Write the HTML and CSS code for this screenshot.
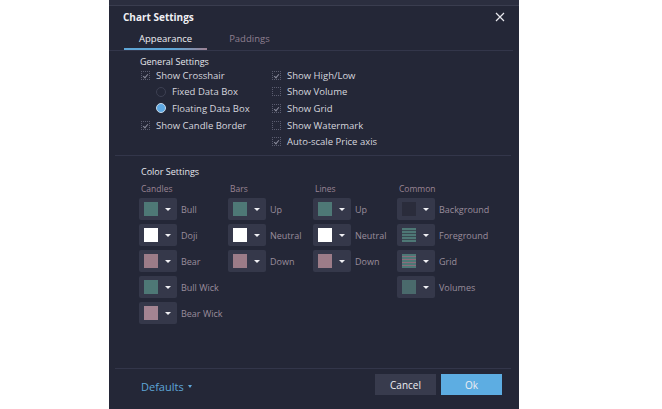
FILE: index.html
```html
<!DOCTYPE html>
<html>
<head>
<meta charset="utf-8">
<link rel="stylesheet" href="styles.css">
</head>
<body>
<div class="dialog">
  <div class="topstrip"></div>
  <div class="titlebar">
    <span class="title">Chart Settings</span>
    <svg class="close" width="10" height="10" viewBox="0 0 10 10"><path d="M1 1L9 9M9 1L1 9" stroke="#e8e8ee" stroke-width="1.2"/></svg>
  </div>
  <div class="tabs">
    <div class="tab active">Appearance</div>
    <div class="tab">Paddings</div>
  </div>
  <div class="general">
    <div class="sec-title">General Settings</div>
    <div class="opts">
      <div class="col">
        <div class="opt"><span class="cb on"></span>Show Crosshair</div>
        <div class="opt sub"><span class="rd"></span>Fixed Data Box</div>
        <div class="opt sub"><span class="rd on"></span>Floating Data Box</div>
        <div class="opt"><span class="cb on"></span>Show Candle Border</div>
      </div>
      <div class="col">
        <div class="opt"><span class="cb on"></span>Show High/Low</div>
        <div class="opt"><span class="cb"></span>Show Volume</div>
        <div class="opt"><span class="cb on"></span>Show Grid</div>
        <div class="opt"><span class="cb"></span>Show Watermark</div>
        <div class="opt"><span class="cb on"></span>Auto-scale Price axis</div>
      </div>
    </div>
  </div>
  <div class="colors">
    <div class="sec-title">Color Settings</div>
    <div class="cgrid">
      <div class="ccol">
        <div class="chead">Candles</div>
        <div class="crow"><span class="cbtn"><span class="sw teal"></span><span class="caret"></span></span>Bull</div>
        <div class="crow"><span class="cbtn"><span class="sw white"></span><span class="caret"></span></span>Doji</div>
        <div class="crow"><span class="cbtn"><span class="sw pink"></span><span class="caret"></span></span>Bear</div>
        <div class="crow"><span class="cbtn"><span class="sw teal"></span><span class="caret"></span></span>Bull Wick</div>
        <div class="crow"><span class="cbtn"><span class="sw pinkdot"></span><span class="caret"></span></span>Bear Wick</div>
      </div>
      <div class="ccol">
        <div class="chead">Bars</div>
        <div class="crow"><span class="cbtn"><span class="sw teal"></span><span class="caret"></span></span>Up</div>
        <div class="crow"><span class="cbtn"><span class="sw white"></span><span class="caret"></span></span>Neutral</div>
        <div class="crow"><span class="cbtn"><span class="sw pink"></span><span class="caret"></span></span>Down</div>
      </div>
      <div class="ccol">
        <div class="chead">Lines</div>
        <div class="crow"><span class="cbtn"><span class="sw teal"></span><span class="caret"></span></span>Up</div>
        <div class="crow"><span class="cbtn"><span class="sw white"></span><span class="caret"></span></span>Neutral</div>
        <div class="crow"><span class="cbtn"><span class="sw pink"></span><span class="caret"></span></span>Down</div>
      </div>
      <div class="ccol">
        <div class="chead">Common</div>
        <div class="crow"><span class="cbtn"><span class="sw dark"></span><span class="caret"></span></span>Background</div>
        <div class="crow"><span class="cbtn"><span class="sw fg"></span><span class="caret"></span></span>Foreground</div>
        <div class="crow"><span class="cbtn"><span class="sw grid"></span><span class="caret"></span></span>Grid</div>
        <div class="crow"><span class="cbtn"><span class="sw vol"></span><span class="caret"></span></span>Volumes</div>
      </div>
    </div>
  </div>
  <div class="footer">
    <div class="defaults">Defaults <span class="dcaret"></span></div>
    <div class="btns">
      <button class="btn cancel">Cancel</button>
      <button class="btn ok">Ok</button>
    </div>
  </div>
</div>
</body>
</html>
```
FILE: styles.css
```css
html, body { margin: 0; padding: 0; background: #ffffff; }
body { font-family: "Open Sans", "Liberation Sans", sans-serif; }
.dialog {
  width: 410px; height: 409px; margin-left: 109px;
  background: #242737; display: flex; flex-direction: column;
  color: #dcdce4; font-size: 9px; box-sizing: border-box;
}
.topstrip { height: 5px; background: #2b2e3f; border-bottom: 1px solid #3a3d4f; }
.titlebar { height: 22px; display: flex; align-items: center; padding: 0 14px; justify-content: space-between; }
.title { font-weight: 700; font-size: 10px; color: #f0f0f4; }
.tabs { display: flex; height: 22px; padding-left: 15px; border-bottom: 1px solid #33364a; margin-right: 6px; }
.tab { height: 21px; display: flex; align-items: center; font-size: 9.5px; color: #8e7f90; }
.tab.active { color: #eeeef2; padding: 0 15px; border-bottom: 2px solid #5ea6d6; border-image: linear-gradient(90deg, #5ea6d6, #5ea6d6 60%, #a08090) 1; height: 20px; }
.tab:not(.active) { margin-left: 22px; }
.general { padding: 4px 0 0 25px; height: 105px; box-sizing: border-box; border-bottom: 1px solid #33364a; margin: 0 8px 0 6px; }
.sec-title { font-size: 9px; color: #e6e6ec; height: 13px; line-height: 13px; }
.opts { display: flex; margin-top: -1px; }
.col { display: flex; flex-direction: column; }
.col:first-child { width: 131px; }
.opt { height: 16.6px; display: flex; align-items: center; color: #d6d6de; white-space: nowrap; font-size: 9.5px; }
.opt.sub { padding-left: 16px; }
.cb { width: 9px; height: 9px; border: 1px dotted #5b5d70; margin: 0 6px 0 1px; position: relative; box-sizing: border-box; }
.cb.on::after { content: ""; position: absolute; left: 2px; top: 1px; width: 2px; height: 4px; border: solid #8a8c9c; border-width: 0 1px 1px 0; transform: rotate(40deg); }
.rd { width: 10px; height: 10px; border-radius: 50%; border: 1px solid #3d4052; margin-right: 6px; box-sizing: border-box; }
.rd.on { background: #5ea8e2; border: 1.5px solid #c8d8e8; }
.colors { padding: 9px 0 0 26px; flex: 1; border-bottom: 1px solid #33364a; margin: 0 8px 0 6px; }
.cgrid { display: grid; grid-template-columns: 89px 85px 84px auto; margin-left: -2px; margin-top: 4px; }
.ccol { display: flex; flex-direction: column; gap: 4px; }
.chead { font-size: 8.5px; color: #9a8494; height: 13px; line-height: 13px; margin-left: 2px; margin-bottom: -1px; }
.crow { display: flex; align-items: center; height: 22px; color: #9a8d9c; font-size: 9px; white-space: nowrap; }
.cbtn { width: 38px; height: 22px; background: #35384a; border-radius: 2px; display: flex; align-items: center; margin-right: 4px; flex: none; }
.sw { width: 14px; height: 14px; margin-left: 5px; }
.teal { background: #4e7876; }
.white { background: #ffffff; }
.pink { background: #9c7c88; }
.dark { background: #2a2c3b; }
.pinkdot { background: radial-gradient(circle, #6e5a66 30%, transparent 31%) 0 0/2px 2px, #a48492; }
.fg { background: repeating-linear-gradient(0deg, #4e7876 0 2px, #3a4a52 2px 3px); }
.grid { background: repeating-linear-gradient(0deg, #4e7876 0 2px, #8a6c7c 2px 3px); }
.vol { background: radial-gradient(circle, #3a5056 30%, transparent 31%) 0 0/2px 2px, #4a6a6c; }
.caret { width: 0; height: 0; border-left: 3px solid transparent; border-right: 3px solid transparent; border-top: 3px solid #f0f0f4; margin-left: 7px; }
.footer { height: 40px; display: flex; align-items: flex-start; justify-content: space-between; padding: 5px 17px 0 32px; box-sizing: border-box; }
.defaults { color: #5ea6d8; font-size: 11px; display: flex; align-items: center; height: 21px; margin-top: 2px; }
.dcaret { width: 0; height: 0; border-left: 2.5px solid transparent; border-right: 2.5px solid transparent; border-top: 3px solid #5ea6d8; margin-left: 4px; }
.btns { display: flex; gap: 5px; }
.btn { width: 61px; height: 21px; border: none; font-family: "Open Sans", sans-serif; font-size: 10px; color: #eeeef2; padding: 0; }
.cancel { background: #383b4d; }
.ok { background: #5dade2; }
```
